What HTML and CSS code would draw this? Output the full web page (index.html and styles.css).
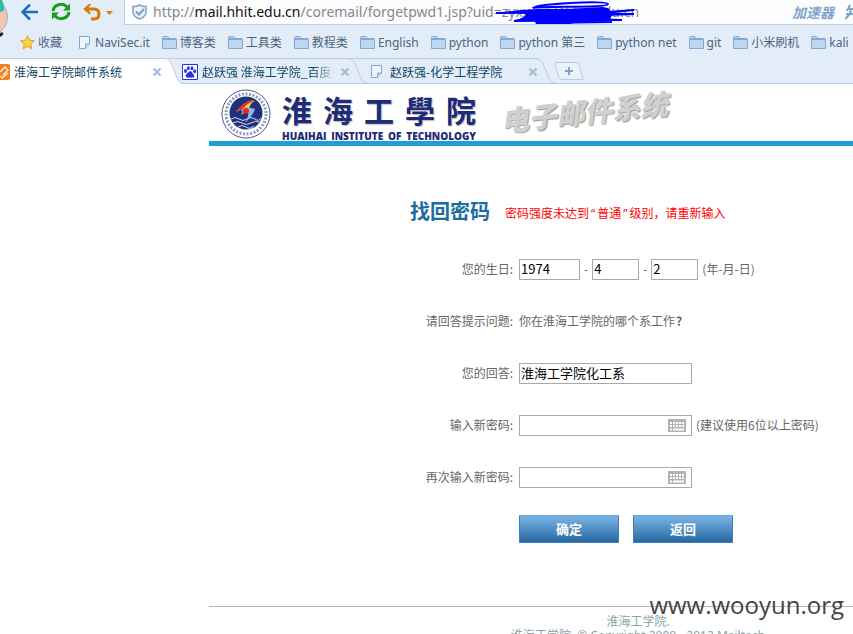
FILE: index.html
```html
<!DOCTYPE html>
<html lang="zh-CN">
<head>
<meta charset="utf-8">
<title>淮海工学院邮件系统</title>
<link rel="stylesheet" href="styles.css">
</head>
<body>
<svg class="defs" aria-hidden="true">
  <symbol id="folder" viewBox="0 0 15 13"><path d="M.5 12.500V1.500Q.5.500 1.500.500H5.500L7.500 2.500H13.500Q14.500 2.500 14.500 3.500V12.500Z" fill="#bdd6f2" stroke="#86a9d2"/><path d="M1 3H14" stroke="#86a9d2" stroke-width="2"/></symbol>
  <symbol id="sheet" viewBox="0 0 12 13"><path d="M.5.500H10.500V8L6.500 12.500H.5Z" fill="#eef5fd" stroke="#7fa6dc"/><path d="M10.500 8H6.500V12.500" fill="#c9dcf5" stroke="#7fa6dc"/></symbol>
  <symbol id="close" viewBox="0 0 10 10"><path d="M1.500 1.500 8.500 8.500M8.500 1.500 1.500 8.500" stroke="#a3bcd6" stroke-width="2"/></symbol>
  <symbol id="keys" viewBox="0 0 18 13"><path d="M0 0H18V13H0Z" fill="#b3b3b3"/><path d="M2 4H16M2 7H16" stroke="#fff" stroke-width="2" stroke-dasharray="2 1"/><path d="M2 10.500H4M5 10.500H16" stroke="#fff" stroke-width="2"/></symbol>
  <symbol id="edge" viewBox="0 0 20 25"><path d="M0 .5Q5 .5 7 5L13 20Q15 24.500 20 24.500" fill="none" stroke="#b9cde4"/></symbol>
</svg>

<header class="browser">
  <div class="toolbar">
    <svg class="avatar" viewBox="0 0 8 40" aria-hidden="true"><circle cx="-11" cy="17" r="18.500" fill="#f5c4aa" stroke="#8fb2da"/><path d="M-5 0H2Q5 6 4 10Q1 14-5 10Z" fill="#31bda4"/><path d="M0 33Q4 31 3 35L0 37Z" fill="#222"/></svg>
    <button class="tool" aria-label="后退"><svg width="18" height="18" viewBox="0 0 18 18"><path d="M17 8H2M9 .5 1.500 8 9 15.500" fill="none" stroke="#1b6fc0" stroke-width="2.500"/></svg></button>
    <button class="tool reload" aria-label="刷新"><svg width="22" height="20" viewBox="0 0 22 20"><path d="M3 8A8 7.500 0 0 1 17 4M19 9A8 7.500 0 0 1 5 13" fill="none" stroke="#1c9a1c" stroke-width="3"/><path d="M20 .5V7.500H13ZM2 16.500V9.500H9Z" fill="#1c9a1c"/></svg></button>
    <button class="tool undo" aria-label="撤销"><svg width="31" height="18" viewBox="0 0 31 18"><path d="M2 5H11Q16 5 16 10T11 15H8" fill="none" stroke="#d97a08" stroke-width="3"/><path d="M0 5 6 0H8L5 5 8 10H6Z" fill="#d97a08"/><path d="M23 7H30L26.500 11Z" fill="#d97a08"/></svg></button>
    <div class="address">
      <svg width="15" height="16" viewBox="0 0 15 16" aria-hidden="true"><path d="M7.500 1Q11 3 14 2.500V8Q14 12.500 7.500 15Q1 12.500 1 8V2.500Q4 3 7.500 1Z" fill="#e9f1fa" stroke="#7f9fc4" stroke-width="1.500"/><path d="M4 7.500 7 10.500 12 5" fill="none" stroke="#7f9fc4" stroke-width="2"/></svg>
      <div class="url">http://<b>mail.hhit.edu.cn</b>/coremail/forgetpwd1.jsp?uid=zyxxxxx@hhit.edu.cn
        <svg class="scribble" viewBox="0 0 160 30" aria-hidden="true"><path d="M43 8C43 4 118 0 118 4S52 6 43 8M6 13 52 12 112 8Q128 10 105 14L144 10 92 14 144 14 50 17 24 21 132 20 60 18 50 23 122 22" fill="none" stroke="#00f" stroke-width="2"/><path d="M6 13Q42 8 66 9L118 8 122 15 120 20 90 21 80 24 46 24 44 20 26 20Q36 17 36 14Z" fill="#00f"/></svg>
      </div>
      <span class="speed">加速器</span>
      <svg class="bolt" width="8" height="18" viewBox="0 0 8 18" aria-hidden="true"><path d="M5 2 2 8M3 6H8M1 11H8M6 6 5 11 0 16" fill="none" stroke="#7fa3cb" stroke-width="2"/></svg>
    </div>
  </div>

  <nav class="bookmarks">
    <a class="fav" href="#"><svg width="15" height="15" viewBox="0 0 15 15"><path d="M7.500.800 9.500 5.200 14.300 5.700 10.700 9 11.700 13.800 7.500 11.400 3.300 13.800 4.300 9 .7 5.700 5.500 5.200Z" fill="#fcd33c" stroke="#e0a020"/></svg>收藏</a>
    <a class="note" href="#"><svg width="12" height="13"><use href="#sheet"/></svg>NaviSec.it</a>
    <a href="#"><svg width="15" height="13"><use href="#folder"/></svg>博客类</a>
    <a href="#"><svg width="15" height="13"><use href="#folder"/></svg>工具类</a>
    <a href="#"><svg width="15" height="13"><use href="#folder"/></svg>教程类</a>
    <a href="#"><svg width="15" height="13"><use href="#folder"/></svg>English</a>
    <a href="#"><svg width="15" height="13"><use href="#folder"/></svg>python</a>
    <a href="#"><svg width="15" height="13"><use href="#folder"/></svg>python 第三</a>
    <a href="#"><svg width="15" height="13"><use href="#folder"/></svg>python net</a>
    <a href="#"><svg width="15" height="13"><use href="#folder"/></svg>git</a>
    <a href="#"><svg width="15" height="13"><use href="#folder"/></svg>小米刷机</a>
    <a href="#"><svg width="15" height="13"><use href="#folder"/></svg>kali</a>
  </nav>

  <div class="tabs">
    <div class="tab active">
      <svg width="10" height="16" viewBox="0 0 10 16" aria-hidden="true"><path d="M0 0H8Q10 0 10 2V14Q10 16 8 16H0Z" fill="#f08122"/><path d="M0 8 5 3 8 6 3 11M0 12 2 14 8 9" fill="none" stroke="#ffe9d0" stroke-width="1.500"/></svg>
      <span class="name">淮海工学院邮件系统</span>
      <button aria-label="关闭"><svg width="10" height="10"><use href="#close"/></svg></button>
      <svg class="edge" viewBox="0 0 20 26" aria-hidden="true"><path d="M0 0Q5 0 7 5L13 20Q15 26 20 26H0Z" fill="#fff"/><path d="M0 .5Q5 .5 7 5L13 20Q15 25.500 20 25.500" fill="none" stroke="#b9cde4"/></svg>
    </div>
    <div class="tab second">
      <svg width="16" height="16" viewBox="0 0 16 16" aria-hidden="true"><path d="M.5.500H15.500V15.500H.5Z" fill="#fff" stroke="#2932e1"/><g fill="#2932e1"><ellipse cx="3.500" cy="7" rx="1.500" ry="2"/><ellipse cx="6.300" cy="4.300" rx="1.400" ry="2"/><ellipse cx="10" cy="4.300" rx="1.400" ry="2"/><ellipse cx="12.700" cy="7.300" rx="1.500" ry="2"/><path d="M8 7Q9.500 7 10.500 9T12.500 12Q12 14.500 8 13.500Q4 14.500 3.500 12Q3.500 10.500 5.500 9T8 7Z"/></g></svg>
      <span class="name fade">赵跃强 淮海工学院_百度搜索</span>
      <button aria-label="关闭"><svg width="10" height="10"><use href="#close"/></svg></button>
      <svg class="edge" aria-hidden="true"><use href="#edge"/></svg>
    </div>
    <div class="tab third">
      <svg width="12" height="13" aria-hidden="true"><use href="#sheet"/></svg>
      <span class="name">赵跃强-化学工程学院</span>
      <button aria-label="关闭"><svg width="10" height="10"><use href="#close"/></svg></button>
      <svg class="edge" aria-hidden="true"><use href="#edge"/></svg>
    </div>
    <button class="newtab" aria-label="新标签页"><svg width="30" height="18" viewBox="0 0 30 18"><path d="M2 .5H22Q24 .5 25 3L29 17.500H8Q6 17.500 5 15L1 3Q0 .5 2 .5Z" fill="#eaf2fb" stroke="#b9cde4"/><path d="M11 9H19M15 5V13" stroke="#7f9fc4" stroke-width="2"/></svg></button>
  </div>
</header>

<main class="page">
  <div class="banner">
    <svg class="crest" viewBox="0 0 50 50" aria-hidden="true">
      <circle cx="25" cy="25" r="24" fill="#fff" stroke="#4a5796"/>
      <circle cx="25" cy="25" r="20" fill="none" stroke="#27357f" stroke-width="3" stroke-dasharray="2 1.500" pathLength="122" opacity=".5"/>
      <circle cx="25" cy="24" r="16.500" fill="#20307e"/>
      <path d="M10 30Q14 27 18 30T26 30T34 30T40 29M12 34Q17 31 21 34T30 34T38 33M17 38Q21 35 25 38T33 37" fill="none" stroke="#d5dcf4"/>
      <path d="M15 23Q26 9 34 12Q29 14 28 20L20 26Q23 20 21 20Z" fill="#ffd32a"/><path d="M16 22Q25 10 33 12Q24 15 23 20Z" fill="#e63222"/>
      <path d="M23 18Q31 19 34 20Q33 25 24 34Q28 26 27 24L20 22Z" fill="#8cb6e8"/><circle cx="25" cy="22" r="3" fill="#f32020"/>
    </svg>
    <div class="school">
      <div class="school-cn"><span>淮</span><span>海</span><span>工</span><span>學</span><span>院</span></div>
      <div class="school-en"><span>HUAIHAI</span><span>INSTITUTE</span><span>OF</span><span>TECHNOLOGY</span></div>
    </div>
    <div class="product">电子邮件系统</div>
  </div>

  <form class="reset">
    <div class="heading"><h1>找回密码</h1><p class="error">密码强度未达到<q>普通</q>级别，请重新输入</p></div>
    <div class="row"><label for="year">您的生日:</label><div class="field"><input id="year" class="year" value="1974"><span>-</span><input class="part" aria-label="月" value="4"><span>-</span><input class="part" aria-label="日" value="2"><span>(年-月-日)</span></div></div>
    <div class="row"><span class="label">请回答提示问题:</span><div class="field">你在淮海工学院的哪个系工作<b>?</b></div></div>
    <div class="row"><label for="answer">您的回答:</label><div class="field"><input id="answer" class="wide" value="淮海工学院化工系"></div></div>
    <div class="row"><label for="pwd">输入新密码:</label><div class="field"><span class="secret"><input id="pwd" class="wide" type="password"><svg width="18" height="13" aria-hidden="true"><use href="#keys"/></svg></span><span>(建议使用6位以上密码)</span></div></div>
    <div class="row"><label for="pwd2">再次输入新密码:</label><div class="field"><span class="secret"><input id="pwd2" class="wide" type="password"><svg width="18" height="13" aria-hidden="true"><use href="#keys"/></svg></span></div></div>
    <div class="row"><span></span><div class="field actions"><button type="button">确定</button><button type="button">返回</button></div></div>
  </form>

  <footer class="foot"><p>淮海工学院.</p><p>淮海工学院 &nbsp;© Copyright 2000 - 2012 Mailtech</p></footer>
</main>
<div class="watermark">www.wooyun.org</div>
</body>
</html>
```
FILE: styles.css
```css
* { box-sizing: border-box; }
body { margin: 0; height: 100vh; overflow: hidden; position: relative; background: #fff; color: #666; font: 12px/16px "Noto Sans CJK SC", sans-serif; }
button { padding: 0; border: 0; background: none; font: inherit; }
svg { display: block; flex: none; }
h1, p { margin: 0; }
.defs { position: absolute; width: 0; height: 0; }

.browser { background: #e3edf8; overflow: hidden; }
.toolbar { display: flex; height: 25px; align-items: center; position: relative; padding-left: 21px; }
.avatar { position: absolute; left: 0; top: 0; width: 8px; height: 40px; }
.reload { margin-left: 11px; }
.undo { margin-left: 11px; }
.address { flex: 1; align-self: stretch; display: flex; align-items: center; margin-left: 10px; padding-left: 7px; background: #fcfdff; border: solid #b9cde4; border-width: 0 0 1px 1px; overflow: hidden; }
.url { position: relative; flex: 1; margin-left: 6px; font: 14px/24px "Noto Sans", sans-serif; color: #888; white-space: nowrap; }
.url b { font-weight: 400; color: #111; }
.scribble { position: absolute; left: 337px; top: 0; width: 160px; height: 30px; }
.speed { font-size: 14px; font-weight: 700; font-style: italic; color: #7fa3cb; }
.bolt { margin-left: 11px; }

.bookmarks { display: flex; gap: 12px; height: 33px; padding: 2px 0 0 20px; align-items: center; white-space: nowrap; font-family: "Noto Sans", "Noto Sans CJK SC", sans-serif; }
.bookmarks a { display: flex; align-items: center; gap: 3px; flex: none; color: #4a6580; text-decoration: none; }
.bookmarks .fav { margin-right: 5px; }
.bookmarks .note { gap: 4px; }

.tabs { display: flex; height: 26px; border-bottom: 1px solid #b9cde4; color: #0e4468; }
.tab { display: flex; align-items: center; position: relative; flex: none; height: 26px; border-top: 1px solid #b9cde4; white-space: nowrap; }
.tab .name { flex: 1; margin-left: 4px; overflow: hidden; }
.tab .fade { margin-right: 6px; -webkit-mask-image: linear-gradient(90deg, #000 85%, transparent); mask-image: linear-gradient(90deg, #000 85%, transparent); }
.edge { position: absolute; right: -18px; top: -1px; width: 20px; height: 26px; }
.active { width: 164px; padding-right: 2px; margin-right: 4px; background: #fff; }
.active .edge { right: -20px; z-index: 1; }
.second { width: 182px; padding-left: 14px; }
.third { width: 188px; padding-left: 21px; }
.third .name { margin-left: 7px; }
.newtab { margin-left: 16px; align-self: center; }

.page { margin-left: 209px; min-width: 858px; }
.banner { display: flex; height: 62px; align-items: flex-start; padding: 5px 0 0 12px; border-bottom: 5px solid #1c9fd6; }
.crest { width: 50px; height: 50px; }
.school { width: 194px; margin-left: 11px; color: #1d2b78; }
.school-cn { display: flex; justify-content: space-between; font: 700 30px/40px "Noto Sans CJK TC", sans-serif; text-shadow: 1px 1px 1px #bbb; }
.school-en { display: flex; justify-content: space-between; font: 800 10px/14px "Open Sans", sans-serif; }
.product { margin: 2px 0 0 24px; font: italic 900 28px/40px "Noto Sans CJK SC", sans-serif; color: #d0d0d0; text-shadow: 1px 1px 1px #999; transform: rotate(-6deg); }

.heading { display: flex; align-items: center; height: 30px; margin: 50px 0 17px 201px; }
.reset h1 { font-size: 20px; line-height: 30px; font-weight: 700; color: #1b6d9f; }
.error { margin: 4px 0 0 15px; color: #f00; }
.error q { quotes: "“" "”"; }
.error q::before, .error q::after { padding: 0 2px; font-family: "Open Sans", sans-serif; }
.row { display: grid; grid-template-columns: 306px 1fr; column-gap: 4px; height: 52px; align-items: center; }
.row label, .label { padding-right: 2px; text-align: right; }
.field { display: flex; align-items: center; gap: 4px; }
.field b { font-weight: 700; margin-left: -3px; }
input { height: 21px; padding: 0 1px 1px; border: 1px solid #a9a9a9; background: #fff; color: #000; font: 13px/18px "Noto Sans CJK SC", sans-serif; }
.year { width: 61px; }
.part { width: 47px; }
.wide { width: 173px; }
.secret { position: relative; }
.secret input { display: block; }
.secret svg { position: absolute; right: 6px; top: 4px; }
.actions { gap: 14px; }
.actions button { width: 100px; height: 28px; border: 1px solid #3f7fb5; border-top-color: #6ba7dc; border-radius: 1px; background: linear-gradient(#7ab5e8, #2868a0); color: #fff; font-size: 13px; font-weight: 700; }

.foot { margin-top: 51px; padding-top: 8px; border-top: 1px solid #a9bfbd; text-align: center; color: #8ba3a5; line-height: 14px; }
.foot p { font-family: "Noto Sans", "Noto Sans CJK SC", sans-serif; }
.watermark { position: absolute; right: 9px; bottom: 12px; font: 24px/34px "Open Sans", sans-serif; color: #444; }
```
